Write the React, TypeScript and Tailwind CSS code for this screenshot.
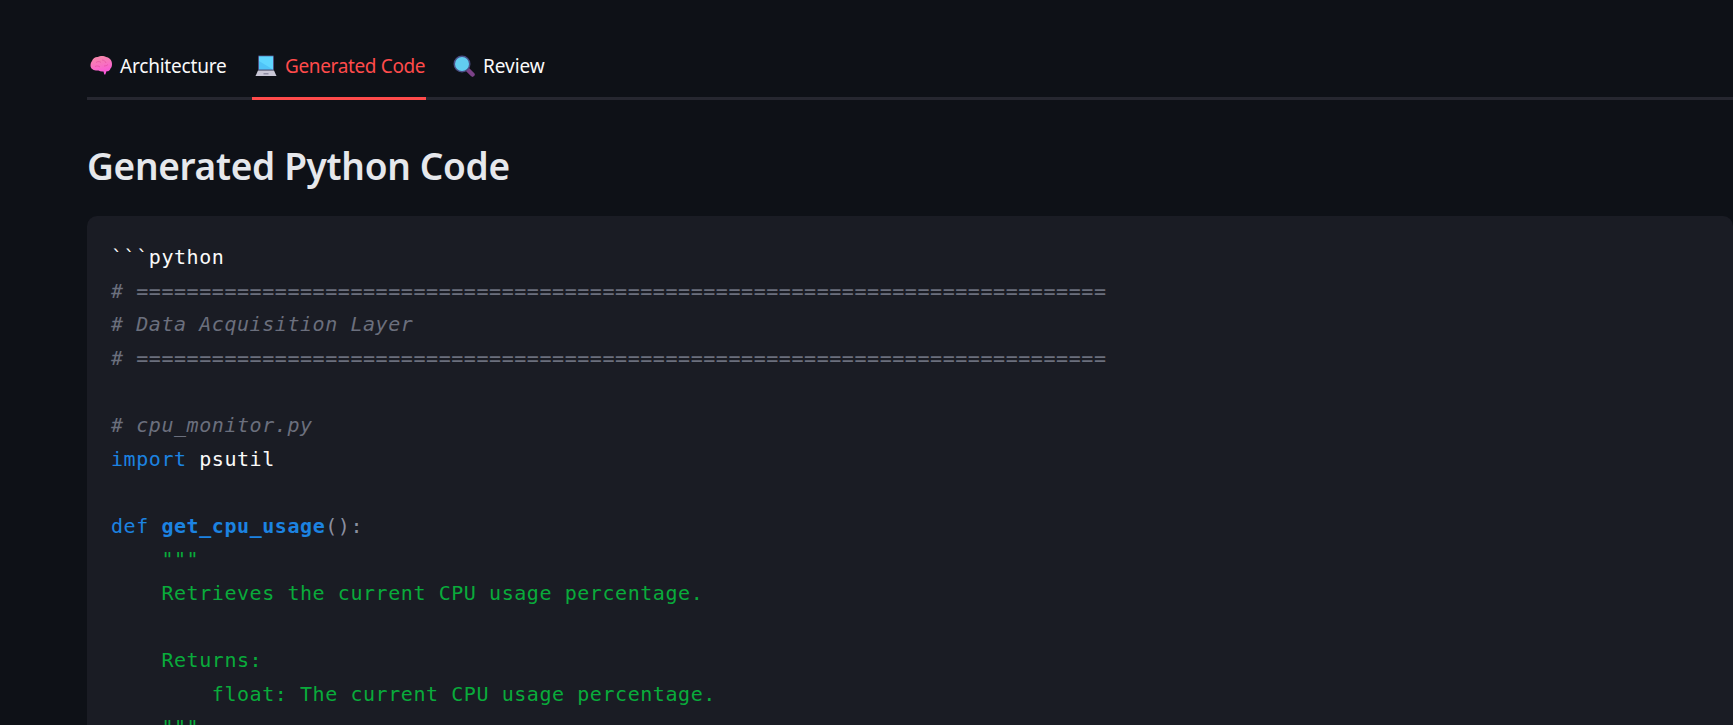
const mono = "font-['DejaVu_Sans_Mono','Liberation_Mono',monospace]";

const Brain = () => (
  <svg viewBox="0 0 22 20" className="w-[22px] h-[20px] shrink-0">
    <defs>
      <linearGradient id="brain" x1="0.3" y1="0" x2="0.6" y2="1">
        <stop offset="0" stopColor="#f58aa8" />
        <stop offset="1" stopColor="#fb55dc" />
      </linearGradient>
    </defs>
    <path d="M2 5C3 2 6 0.500 8 1 10 -0.300 14 -0.300 16 1c3.500 0.500 6 3 6 7 0 2-0.500 3.500-1.500 4.500-0.500 2-2 3-4 2.800L15.300 18.500 14.300 18.500 13.500 15.500c-2 0.300-3.500 0-5-1-3.500 0.500-8 -1-8-5 0-1.800 0.500-3.300 1.500-4.500z" fill="url(#brain)" />
    <path d="M6 6.500c2-1.500 4-1 5 0M12 4c2 0 3 1 4 3M5 10.500c2-1 4-0.500 5 0.500M14 10c1.500 0 3-0.500 4-1.500" stroke="#e4509f" strokeWidth="0.700" fill="none" />
  </svg>
);

const Laptop = () => (
  <svg viewBox="0 0 22 22" className="w-[22px] h-[22px] shrink-0">
    <rect x="3" y="0.500" width="16" height="15" rx="1" fill="#4d5080" />
    <rect x="4" y="1.500" width="14" height="13" fill="#4fc3f7" />
    <path d="M4 1.500h14v13L4 6z" fill="#5fd6ff" />
    <path d="M3 15.500h16l2.500 5.500H0.500z" fill="#c9c7d6" />
    <rect x="8.500" y="18" width="5" height="1.500" fill="#8f8da3" />
  </svg>
);

const Magnifier = () => (
  <svg viewBox="0 0 22 22" className="w-[22px] h-[22px] shrink-0">
    <path d="M14.500 14.500l5 5" stroke="#7c4288" strokeWidth="4.500" strokeLinecap="round" />
    <circle cx="9" cy="9" r="8.500" fill="#4a4f86" />
    <circle cx="9" cy="9" r="7" fill="#62cdf0" />
  </svg>
);

const tabs = [
  { icon: <Brain />, label: "Architecture", width: "w-[141px] tracking-[-0.2px]" },
  { icon: <Laptop />, label: "Generated Code", active: true, width: "w-[174px] tracking-[-0.36px]" },
  { icon: <Magnifier />, label: "Review", width: "tracking-[-0.05px]" },
];

const Comment = ({ children }: { children: string }) => (
  <span className="italic text-[#6b6f7d]">{children}</span>
);
const Doc = ({ children }: { children: string }) => <span className="text-[#09ab3b]">{children}</span>;
const Kw = ({ children }: { children: string }) => <span className="text-[#1c83e1]">{children}</span>;

const rule = "# " + "=".repeat(77);

export default function App() {
  return (
    <div className="h-[725px] overflow-hidden bg-[#0e1117] pl-[87px] pt-[42px] font-['Noto_Sans','Open_Sans',sans-serif]">
      <div className="flex gap-[24px] border-b-[3px] border-[#262730] h-[58px]">
        {tabs.map((tab) => (
          <div
            key={tab.label}
            className={`flex items-center gap-[8px] h-[58px] pl-[3px] pb-[7px] text-[19px] whitespace-nowrap border-b-[3px] ${tab.width} ${
              tab.active ? "border-[#ff4b4b] text-[#ff4b4b]" : "border-transparent text-[#fafafa]"
            }`}
          >
            {tab.icon}
            <span>{tab.label}</span>
          </div>
        ))}
      </div>

      <h2 className="mt-[40px] text-[37px] leading-[52px] font-semibold tracking-[-0.3px] text-[#e6e8ec]">
        Generated Python Code
      </h2>

      <div className={`mt-[24px] rounded-l-[10px] rounded-tr-[10px] bg-[#1a1c24] pl-[24px] pt-[25px] text-[20px] leading-[33.6px] tracking-[0.56px] text-[#fafafa] ${mono}`}>
        <pre className={`m-0 ${mono}`}>
          <div>```python</div>
          <div><Comment>{rule}</Comment></div>
          <div><Comment># Data Acquisition Layer</Comment></div>
          <div><Comment>{rule}</Comment></div>
          <div>&nbsp;</div>
          <div><Comment># cpu_monitor.py</Comment></div>
          <div><Kw>import</Kw> psutil</div>
          <div>&nbsp;</div>
          <div><Kw>def</Kw> <span className="font-bold text-[#1c83e1]">get_cpu_usage</span><span className="text-[#8b8fa0]">():</span></div>
          <div><Doc>{'    """'}</Doc></div>
          <div><Doc>    Retrieves the current CPU usage percentage.</Doc></div>
          <div>&nbsp;</div>
          <div><Doc>    Returns:</Doc></div>
          <div><Doc>        float: The current CPU usage percentage.</Doc></div>
          <div><Doc>{'    """'}</Doc></div>
        </pre>
      </div>
    </div>
  );
}
